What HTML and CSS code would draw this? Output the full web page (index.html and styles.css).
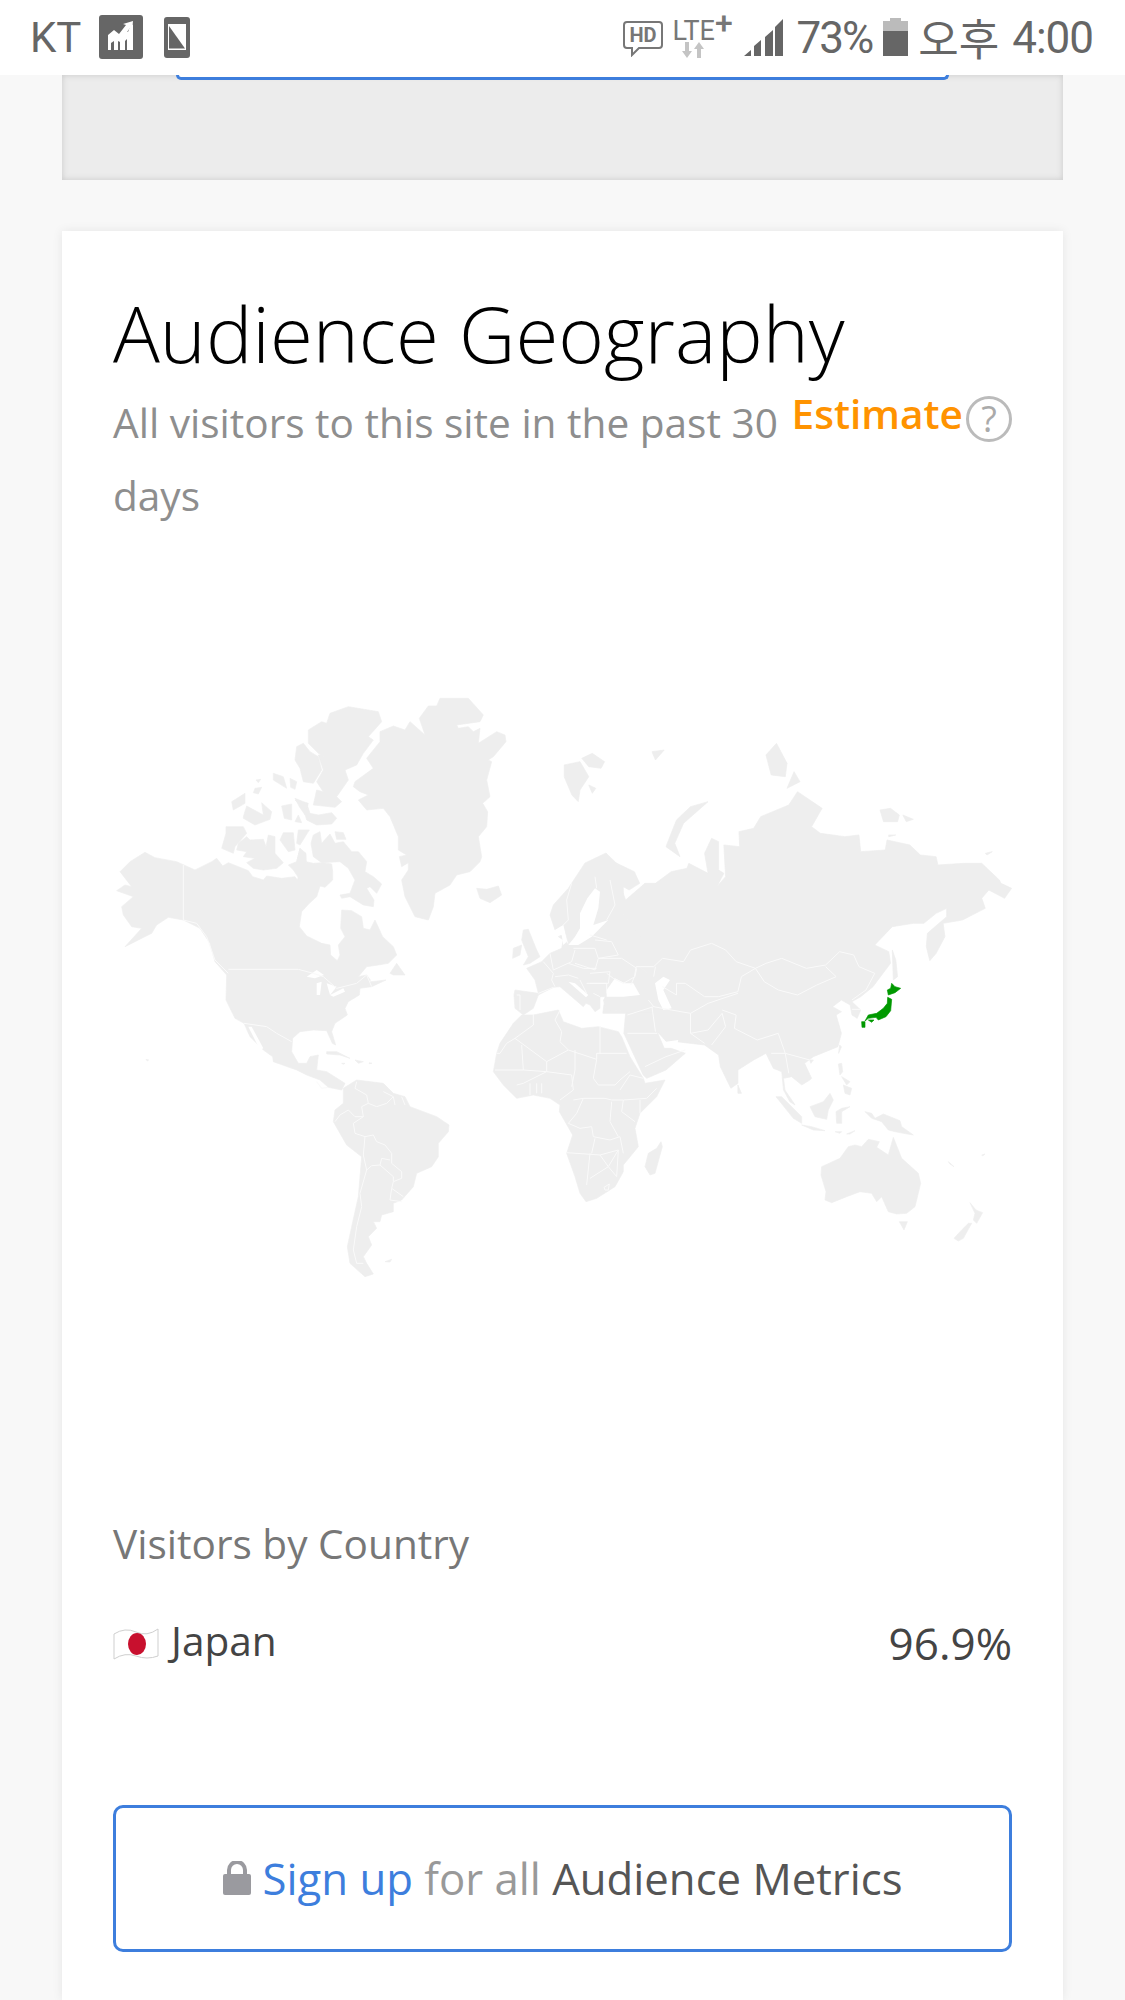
FILE: index.html
```html
<!DOCTYPE html>
<html lang="en">
<head>
<meta charset="utf-8">
<title>Audience Geography</title>
<link rel="stylesheet" href="styles.css">
</head>
<body>
<header class="status">
  <div class="status-left">
    <span class="carrier">KT</span>
    <svg class="ico-chart" viewBox="0 0 44 44"><rect width="44" height="44" rx="3" fill="#666"/><path d="M9 35V24l6-5 5 4 6-8 3 2 3-8 2 1v25h-6V24l-2 2v9h-5V27l-2-1v9h-4V26l-3 2v7z" fill="#fff"/><path d="M9 20l6-5 5 4 7-9-3-1 10-3-1 10-2-3-10 13-6-5-6 5z" fill="#fff"/></svg>
    <svg class="ico-phone" viewBox="0 0 26 41"><rect width="26" height="41" rx="3" fill="#666"/><rect x="4" y="7" width="18" height="26" fill="#fff"/><path d="M5 9v22.500h16z" fill="#666"/></svg>
  </div>
  <div class="status-right">
    <svg class="ico-hd" viewBox="0 0 40 36"><path d="M4 1h32q3 0 3 3v20q0 3-3 3H16l-7 7v-7H4q-3 0-3-3V4q0-3 3-3z" fill="none" stroke="#777" stroke-width="2"/><text x="20" y="21" class="hd-text" text-anchor="middle">HD</text></svg>
    <span class="lte">
      <span class="lte-text">LTE<sup class="lte-plus">+</sup></span>
      <svg class="ico-arrows" viewBox="0 0 24 16"><path d="M3 0h4v9h3l-5 7-5-7h3z" fill="#c4c4c4"/><path d="M15 16h4V7h3l-5-7-5 7h3z" fill="#c4c4c4"/></svg>
    </span>
    <svg class="ico-signal" viewBox="0 0 39 38"><path d="M0 38l7-6v6zM10 38V28l7-6v16zM21 38V19l8-7v26zM31 38V9l8-8v37z" fill="#666"/></svg>
    <span class="pct">73%</span>
    <svg class="ico-batt" viewBox="0 0 25 38"><path d="M7 0h11v3h7v10H0V3h7z" fill="#bbb"/><rect y="13" width="25" height="25" fill="#666"/></svg>
    <span class="ampm">오후</span>
    <span class="clock">4:00</span>
  </div>
</header>

<section class="prev-card"><div class="prev-button"></div></section>

<main class="card">
  <h1 class="title">Audience Geography</h1>
  <div class="sub-wrap">
    <p class="sub">All visitors to this site in the past 30 days</p>
    <div class="estimate"><span class="est-label">Estimate</span><span class="help">?</span></div>
  </div>

  <svg class="map" viewBox="113 540 899 960">
    <g class="land z3" transform="translate(100 680) scale(.33333)">
      <polygon points="60,575 90,545 135,517 165,533 230,545 285,570 335,545 350,535 368,558 385,548 445,572 458,590 490,600 500,588 545,595 585,590 592,600 603,565 590,545 600,505 618,545 640,550 670,548 695,552 698,575 698,600 675,622 660,618 650,650 628,670 605,695 598,740 620,768 665,790 690,795 692,825 712,842 720,825 715,795 735,770 722,745 725,690 755,692 785,710 790,745 810,750 825,720 848,770 880,800 890,825 865,850 835,855 800,860 775,890 800,885 815,905 858,900 815,920 780,925 778,945 745,965 735,985 742,1005 705,1030 695,1055 707,1095 697,1090 680,1052 640,1050 600,1055 578,1075 575,1115 595,1150 620,1150 630,1130 655,1125 650,1170 680,1175 735,1210 725,1230 685,1222 660,1200 620,1185 590,1170 520,1145 518,1130 490,1110 450,1070 432,1030 405,1015 378,960 380,885 345,845 330,790 300,745 250,720 205,712 170,735 155,760 75,800 125,745 95,740 70,705 65,680 100,650 50,632 75,615 95,620"/>
      <polygon points="690,100 745,80 835,95 845,125 805,170 820,180 790,220 770,255 735,270 745,300 710,350 725,365 705,382 640,375 650,330 670,335 650,305 670,270 655,225 695,225 685,240 655,220 625,190 625,150 665,125 680,130"/>
      <polygon points="590,200 610,190 630,215 655,230 665,270 640,310 610,305 600,265 585,240"/>
      <polygon points="585,360 620,370 630,400 655,405 695,398 710,415 695,432 650,435 620,420 610,385"/>
      <polygon points="640,465 660,455 665,490 690,462 705,490 730,485 755,515 775,515 800,545 795,575 820,590 845,612 830,640 810,620 800,625 822,660 820,680 790,675 750,650 725,655 720,645 750,640 765,600 745,565 720,545 665,548 640,530 633,490"/>
      <polygon points="415,490 440,470 450,480 490,478 498,500 505,465 525,470 525,520 550,548 530,565 490,570 460,565 440,548 465,535 430,530 440,515 410,510"/>
      <polygon points="378,440 430,440 440,460 405,500 400,520 365,505 378,460"/>
      <polygon points="395,365 435,340 435,370 400,390"/>
      <polygon points="430,410 440,378 490,405 485,368 515,395 510,418 465,435 430,415"/>
      <polygon points="520,280 550,290 560,325 520,300"/>
      <polygon points="570,295 590,305 585,328 572,322"/>
      <polygon points="465,325 485,322 475,342 460,338"/>
      <polygon points="468,300 482,298 475,308"/>
      <polygon points="545,378 575,372 575,420 553,415"/>
      <polygon points="585,355 610,365 625,370 615,405 598,380"/>
      <polygon points="595,405 605,428 585,425"/>
      <polygon points="550,458 580,458 585,510 565,515 540,480"/>
      <polygon points="595,450 628,450 600,495 590,490"/>
      <polygon points="705,455 730,458 738,478 710,478"/>
      <polygon points="600,505 618,520 620,575 600,600 580,570 565,555 590,545"/>
      <polygon points="1020,55 1105,55 1150,105 1140,125 1070,135 1075,145 1105,140 1120,155 1140,145 1135,190 1190,155 1215,165 1218,185 1180,230 1165,240 1175,245 1160,300 1170,350 1148,370 1163,395 1160,440 1135,470 1145,530 1140,545 1110,575 1070,585 1050,615 1005,640 1000,680 985,720 945,710 915,650 905,600 925,570 925,548 905,560 898,530 920,525 895,510 895,470 870,410 850,385 800,390 775,360 805,345 780,335 760,320 765,305 820,265 800,235 840,185 840,155 880,138 915,150 930,125 975,165 958,115 985,78 1010,78"/>
      <polygon points="1130,625 1160,628 1195,618 1205,645 1170,668 1140,655"/>
      <polygon points="870,880 890,850 915,885 880,885"/>
    </g>
    <g class="land z5" transform="translate(100 1000) scale(.33333)">
      <polygon points="730,265 770,240 850,250 880,280 915,290 930,320 1010,350 1047,375 1045,395 1015,430 1015,470 995,500 950,520 940,560 905,600 880,610 880,635 845,645 840,665 820,665 830,685 805,710 815,735 790,770 800,790 820,822 795,830 750,790 742,740 755,680 775,590 785,470 740,435 700,365 705,330 730,310"/>
      <polygon points="680,155 710,155 750,175 720,165 680,162"/>
      <polygon points="765,180 790,185 775,190"/>
      <polygon points="725,190 735,190 730,193"/>
      <polygon points="808,188 816,190 808,191"/>
      <polygon points="855,785 875,778 870,786"/>
      <polygon points="138,178 146,180 142,183"/>
    </g>
    <g class="land z4" transform="translate(480 720) scale(.35088 .33333)">
      <polygon points="370,420 440,455 455,490 425,510 400,495 415,540 470,490 500,490 545,455 590,445 595,430 650,460 640,400 660,355 680,365 680,450 695,460 675,500 700,470 695,375 740,380 738,335 780,325 800,290 880,255 905,215 975,265 945,320 970,340 1040,350 1080,345 1085,395 1155,390 1160,360 1225,375 1255,405 1300,410 1305,435 1380,430 1430,430 1480,480 1485,490 1515,505 1495,535 1450,510 1430,535 1440,565 1375,600 1320,610 1325,650 1300,700 1282,722 1272,680 1275,640 1330,590 1330,565 1300,580 1265,610 1235,610 1175,620 1125,675 1165,695 1170,730 1120,800 1085,830 1060,845 1085,870 1075,895 1060,885 1055,855 1030,840 1005,860 1030,875 1015,885 1030,940 1020,980 950,1010 925,1030 945,1075 940,1080 917,1095 888,1070 865,1075 869,1110 898,1155 883,1145 865,1110 860,1055 836,1045 815,1000 780,1020 735,1050 735,1090 715,1105 685,1040 680,1005 640,975 560,965 530,965 505,935 525,985 545,985 585,1000 530,1050 475,1075 465,1065 410,940 415,880 350,880 360,800 400,700 370,620 380,560"/>
      <polygon points="240,135 285,125 310,170 285,210 280,245 262,225 240,170"/>
      <polygon points="290,115 320,100 355,125 345,145 310,140"/>
      <polygon points="310,195 330,205 320,220"/>
      <polygon points="490,95 525,90 500,120"/>
      <polygon points="650,245 600,260 560,300 530,380 570,410 555,370 580,310"/>
      <polygon points="815,105 845,70 875,130 870,170 830,165"/>
      <polygon points="895,155 912,185 875,205"/>
      <polygon points="1140,270 1170,265 1195,285 1190,305 1150,305"/>
      <polygon points="1205,285 1235,298 1215,305"/>
      <polygon points="1165,345 1185,345 1165,350"/>
      <polygon points="1440,400 1460,395 1445,405"/>
      <polygon points="1175,690 1185,720 1190,770 1178,780"/>
      <polygon points="735,1095 745,1120 735,1120"/>
      <polygon points="1025,975 1030,980 1022,1000"/>
      <polygon points="940,1020 950,1020 943,1030"/>
    </g>
    <g class="land z12" transform="translate(500 880) scale(.33333)">
      <polygon points="150,105 160,75 205,25 255,-51 318,-81 370,-30 370,100 420,170 420,260 460,300 460,395 430,395 380,395 320,390 310,360 320,350 300,350 300,385 285,395 270,375 258,370 250,380 215,350 180,320 160,322 115,345 100,385 70,405 45,385 42,345 45,330 115,340 105,300 80,265 125,245 150,220 185,205 190,180 175,170 185,165 205,195 205,190 190,135 165,150"/>
      <polygon points="70,150 85,148 110,210 120,230 90,250 70,255 85,230 65,180"/>
      <polygon points="40,205 65,195 60,225 38,235"/>
    </g>
    <g class="sea" transform="translate(500 880) scale(.33333)">
      <polygon points="325,120 280,135 295,85 300,35 285,25 262,55 240,100 240,145 225,170 205,195 235,195 275,170"/>
      <polygon points="165,150 190,135 200,185 190,195 185,165"/>
      <polygon points="205,305 225,310 265,345 258,352"/>
      <polygon points="320,330 345,295 375,310 400,310 420,345 370,350 320,350"/>
      <polygon points="465,310 490,290 510,300 490,330 515,385 490,390 475,360"/>
    </g>
    <g class="sea" transform="translate(100 680) scale(.33333)">
      <polygon points="620,890 650,870 672,885 645,895"/>
      <polygon points="650,910 665,905 660,945 650,945"/>
      <polygon points="680,910 710,920 690,945"/>
      <polygon points="690,945 730,925 735,935 700,950"/>
      <polygon points="445,1040 455,1040 490,1105 480,1110"/>
      <polygon points="830,870 870,850 860,885 810,905 825,875"/>
    </g>
    <g class="sea" transform="translate(480 720) scale(.35088 .33333)">
      <polygon points="505,935 530,970 560,985 565,960 530,965"/>
    </g>
    <g class="land z11" transform="translate(480 1000) scale(.33333)">
      <polygon points="100,70 125,45 160,45 235,30 250,65 305,85 355,80 415,95 425,110 450,170 490,235 495,250 555,240 530,290 480,340 465,385 475,440 430,495 430,515 405,560 350,595 318,605 300,580 285,530 260,460 278,405 238,335 240,315 210,295 160,285 110,295 70,255 40,215 50,160 60,130"/>
      <polygon points="543,425 547,440 525,520 510,525 495,500 505,460 530,445"/>
    </g>
    <g class="land z10" transform="translate(760 1060) scale(.33333)">
      <polygon points="48,110 65,110 125,170 125,190 100,175"/>
      <polygon points="125,195 155,200 195,212 160,210"/>
      <polygon points="150,140 190,125 210,100 220,120 205,150 200,178 165,170"/>
      <polygon points="228,155 245,145 270,140 245,155 245,190 230,190"/>
      <polygon points="235,12 245,10 248,35 240,45"/>
      <polygon points="250,75 275,85 270,105 255,100"/>
      <polygon points="245,50 270,65 260,75"/>
      <polygon points="315,155 335,160 345,175 370,162 420,182 425,200 460,225 430,220 405,215 385,210 365,185 335,175"/>
      <polygon points="225,215 245,215 240,220"/>
      <polygon points="260,222 285,212 270,222"/>
      <polygon points="185,320 240,295 265,260 285,255 305,260 325,238 358,245 350,262 385,285 400,232 425,295 475,340 482,370 465,440 440,460 410,462 385,455 365,410 350,425 335,400 300,395 260,410 215,428 195,420 198,395 183,345"/>
      <polygon points="418,485 442,485 432,510"/>
      <polygon points="630,428 648,450 668,458 650,490 640,480 645,460"/>
      <polygon points="625,490 635,490 610,535 595,543 582,535 605,510"/>
      <polygon points="565,305 582,320 570,312"/>
      <polygon points="665,285 675,282 668,288"/>
    </g>

    <g class="borders" transform="translate(100 680) scale(.33333)">
      <polyline points="250,555 250,720 290,730 320,770 345,840 385,880"/>
      <polyline points="385,868 595,868 640,880 670,890 710,925 770,910 800,885 815,920"/>
      <polyline points="432,1030 500,1040 530,1060 575,1085"/>
    </g>
    <g class="borders" transform="translate(100 1000) scale(.33333)">
      <polyline points="770,245 765,265 800,285 805,310 785,320 790,350"/>
      <polyline points="705,365 720,345 745,330 765,350 790,350 760,370 765,400 795,410 790,465"/>
      <polyline points="795,410 820,405 830,425 855,435 875,460 875,490 905,515 905,535 880,545"/>
      <polyline points="790,465 800,510 815,497 840,495 845,475 870,480"/>
      <polyline points="840,495 880,530 880,545 875,565 870,600 905,605"/>
      <polyline points="800,510 780,580 785,620 770,680 760,750 770,790 790,790"/>
      <polyline points="875,565 910,590"/>
      <polyline points="850,275 880,290 860,310 830,320 805,310"/>
      <polyline points="880,290 885,315"/>
      <polyline points="905,290 915,315"/>
      <polyline points="650,245 665,265 685,262"/>
    </g>
    <g class="borders" transform="translate(480 1000) scale(.33333)">
      <polyline points="105,115 200,185 265,150 350,178"/>
      <polyline points="200,185 200,215 130,210 125,135"/>
      <polyline points="240,30 225,60 245,95 240,125 265,150"/>
      <polyline points="285,150 285,210 275,260"/>
      <polyline points="350,178 350,160 440,160"/>
      <polyline points="360,80 360,160"/>
      <polyline points="350,178 340,235 355,255 405,255 420,240 450,215"/>
      <polyline points="45,210 130,210"/>
      <polyline points="110,255 130,250 200,215 275,225 280,270 240,300"/>
      <polyline points="150,250 150,285"/>
      <polyline points="170,250 170,280"/>
      <polyline points="185,250 185,280"/>
      <polyline points="280,300 310,295 375,295 395,300 430,300 500,295 530,265"/>
      <polyline points="420,270 450,225 490,235"/>
      <polyline points="310,295 290,340 265,370 300,385 335,380 340,410 390,420 420,410 430,460"/>
      <polyline points="260,458 360,465 415,450"/>
      <polyline points="330,460 320,555"/>
      <polyline points="360,465 385,500 415,450 410,530 385,500 330,535"/>
      <polyline points="395,305 390,365 415,410"/>
      <polyline points="480,300 480,340"/>
      <polyline points="430,300 425,335 465,365"/>
      <polyline points="345,415 335,460"/>
      <polygon points="372,562 388,552 385,570 375,570"/>
      <polyline points="50,160 60,160 80,130 105,115 160,75 160,45"/>
    </g>
    <g class="borders" transform="translate(480 720) scale(.35088 .33333)">
      <polyline points="445,740 440,770 430,795"/>
      <polyline points="500,740 495,770"/>
      <polyline points="445,740 495,740 520,715 580,725 600,690 660,670 700,690 730,725 785,745"/>
      <polyline points="785,745 815,730 860,715 930,745 985,735 1025,695 1065,705 1080,740 1125,760 1100,810 1060,840"/>
      <polyline points="785,745 810,785 850,810 905,825 960,795 1015,770 985,740"/>
      <polyline points="785,745 745,770 735,815 680,830 640,830 585,790 560,790 560,825 520,800"/>
      <polyline points="495,860 545,870 600,880 600,940 640,970"/>
      <polyline points="600,880 650,850 735,820"/>
      <polyline points="600,940 650,930 690,880"/>
      <polyline points="690,880 700,920 660,975"/>
      <polyline points="690,870 730,885 725,925 790,960 850,940 870,1000 940,1020"/>
      <polyline points="830,1000 870,1000 880,1060"/>
      <polyline points="480,840 495,860 420,885"/>
      <polyline points="490,860 500,935"/>
      <polyline points="420,940 505,940"/>
      <polyline points="585,990 530,1010 470,1040"/>
      <polyline points="1060,868 1085,868"/>
    </g>
    <g class="borders" transform="translate(500 880) scale(.33333)">
      <polyline points="215,10 200,60 205,120 190,135"/>
      <polyline points="285,-10 290,25"/>
      <polyline points="330,0 345,75 320,120"/>
      <polyline points="130,245 160,280 155,300 165,320"/>
      <polyline points="115,340 160,322"/>
      <polyline points="150,220 160,270 215,245 225,210"/>
      <polyline points="220,205 285,205 295,235 285,270 225,250"/>
      <polyline points="285,180 335,185 355,225 295,235"/>
      <polyline points="295,235 365,235 410,265 405,290 370,310 340,295 320,280"/>
      <polyline points="270,165 320,180"/>
      <polyline points="270,280 330,275 325,310 270,310"/>
      <polyline points="50,345 60,345 60,390"/>
      <polyline points="165,290 205,285 235,295"/>
      <polyline points="205,250 250,265 290,265"/>
      <polyline points="240,300 260,340"/>
      <polyline points="260,310 320,310 320,340"/>
      <polyline points="280,340 300,350"/>
    </g>
    <g class="japan" transform="translate(800 940) scale(.33333)">
      <polygon points="275,130 285,140 302,145 285,158 265,165 262,150 272,145"/>
      <polygon points="263,172 275,178 272,212 258,230 235,240 228,232 205,235 195,243 205,225 230,220 250,205 262,190"/>
      <polygon points="185,245 195,245 195,262 186,262"/>
      <polygon points="205,240 222,240 215,247"/>
    </g>
  </svg>

  <h2 class="by-country">Visitors by Country</h2>
  <div class="row">
    <span class="country">
      <svg class="flag" viewBox="0 0 46 33"><path d="M1 6q11-7 22-2t22-3v27q-11 4-22 0T1 31z" fill="#fff" stroke="#cfcfcf"/><ellipse cx="24" cy="16" rx="9" ry="11" fill="#c8102e"/></svg>
      <span class="country-name">Japan</span>
    </span>
    <span class="share">96.9%</span>
  </div>

  <a class="cta">
    <svg class="lock" viewBox="0 0 28 34"><path d="M6 14V9a8 8 0 0 1 16 0v5" fill="none" stroke="#9a9a9f" stroke-width="4"/><rect y="13" width="28" height="21" rx="2" fill="#9a9a9f"/></svg>
    <span class="cta-text"><span class="cta-blue">Sign up</span> <span class="cta-gray">for all</span> Audience Metrics</span>
  </a>
</main>
</body>
</html>
```

FILE: styles.css
```css
* { box-sizing: border-box; }
html, body { margin: 0; padding: 0; height: 2000px; overflow: hidden; }
body { background: #f8f8f8; font-family: "Open Sans", sans-serif; }

.status {
  position: relative; z-index: 2;
  height: 75px; background: #fff; color: #666;
  display: flex; justify-content: space-between; align-items: flex-start;
  padding: 0 32px 0 30px;
  font-family: Roboto, sans-serif;
}
.status-left, .status-right { display: flex; align-items: flex-start; }
.carrier { font-size: 42px; line-height: 38px; margin-top: 19px; }
.ico-chart { width: 44px; height: 44px; margin: 15px 0 0 18px; }
.ico-phone { width: 26px; height: 41px; margin: 17px 0 0 21px; }
.ico-hd { width: 40px; height: 36px; margin-top: 21px; }
.hd-text { font: 700 20px Roboto, sans-serif; fill: #777; }
.lte { display: flex; flex-direction: column; align-items: flex-start; width: 64px; margin: 20px 0 0 10px; }
.lte-text { font: 400 27px/22px Roboto, sans-serif; color: #777; white-space: nowrap; }
.lte-plus { font-size: 32px; font-weight: 500; line-height: 0; vertical-align: 6px; }
.ico-arrows { width: 24px; height: 16px; margin: 0 0 0 9px; }
.ico-signal { width: 39px; height: 38px; margin: 18px 0 0 7px; }
.pct { font-size: 44px; line-height: 38px; letter-spacing: -2px; margin: 19px 0 0 14px; }
.ico-batt { width: 25px; height: 38px; margin: 18px 0 0 11px; }
.ampm { font: 400 44px/38px "Noto Sans CJK KR", sans-serif; margin: 18px 0 0 10px; }
.clock { font-size: 44px; line-height: 38px; letter-spacing: -1px; margin: 19px 0 0 13px; }

.prev-card {
  height: 105px; margin: 0 62px 51px; padding: 0 114px;
  background: #ececec;
  box-shadow: inset 0 0 6px #c8c8c8;
}
.prev-button {
  height: 5px; background: #fff;
  border-bottom: 3px solid #3d7edd;
  border-left: 3px solid #3d7edd;
  border-right: 3px solid #3d7edd;
  border-radius: 0 0 8px 8px;
}

.card {
  margin: 0 62px; padding: 52px 51px 48px;
  background: #fff;
  box-shadow: 0 0 10px rgba(0, 0, 0, .08);
  height: 1769px;
}
.title { margin: 0; font-size: 78px; line-height: 100px; font-weight: 300; color: #000; white-space: nowrap; }
.sub-wrap { position: relative; margin-top: 3px; }
.sub { margin: 0; width: 690px; font-size: 40.6px; line-height: 73px; color: #8e8e8e; }
.estimate { position: absolute; right: 0; top: 3px; display: flex; align-items: flex-start; }
.est-label { font-size: 40.6px; line-height: 50px; font-weight: 600; color: #ff9300; }
.help {
  width: 46px; height: 46px; margin: 7px 0 0 3px; border-radius: 50%;
  border: 3px solid #bbb; color: #aaa;
  font-size: 36px; line-height: 40px; text-align: center;
}

.map { display: block; width: 899px; height: 960px; margin-top: 8px; }
.land { fill: #eee; stroke: #eee; stroke-width: 2; stroke-linejoin: round; }
.sea { fill: #fff; }
.borders { fill: none; stroke: #fafafa; stroke-width: 1; stroke-linejoin: round; }
.borders * { vector-effect: non-scaling-stroke; }
.japan { fill: #009900; stroke: #009900; stroke-width: 2; }

.by-country { margin: 17px 0 0; font-size: 40.6px; line-height: 54px; font-weight: 400; color: #777; }
.row { display: flex; justify-content: space-between; align-items: flex-start; margin-top: 45px; color: #444; }
.country { display: flex; align-items: flex-start; }
.flag { width: 46px; height: 33px; margin-top: 12px; }
.country-name { font-size: 40.6px; line-height: 50px; margin-left: 12px; }
.share { font-size: 44px; line-height: 54px; }

.cta {
  display: flex; align-items: center; justify-content: center;
  height: 147px; margin-top: 135px; padding-bottom: 2px;
  border: 3px solid #3d7edd; border-radius: 10px;
  color: #555; font-size: 43.7px;
}
.lock { width: 28px; height: 34px; margin-right: 12px; }
.cta-blue { color: #3d7edd; }
.cta-gray { color: #999; }
```
